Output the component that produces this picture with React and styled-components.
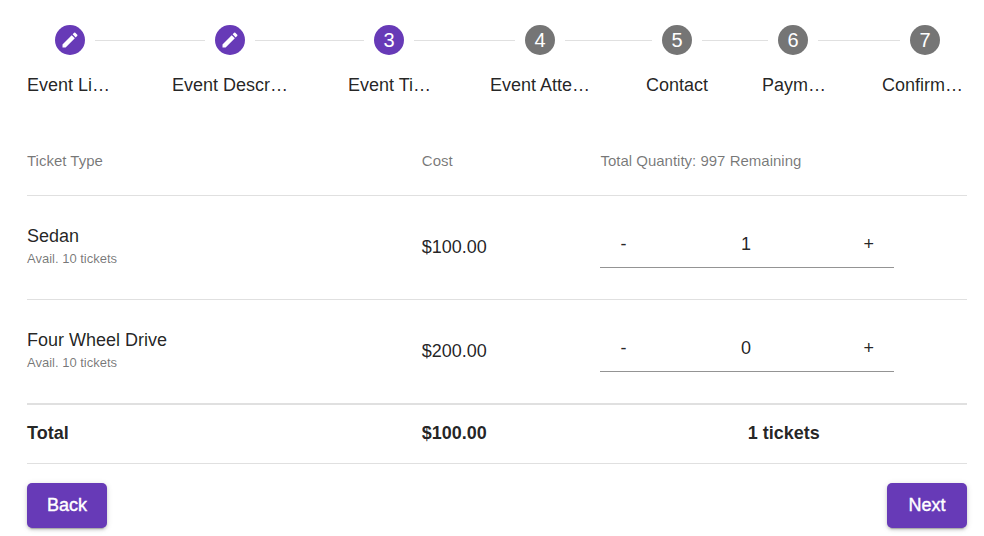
import React from 'react';
import styled, { createGlobalStyle } from 'styled-components';
import { MdEdit } from 'react-icons/md';

const PRIMARY = '#673ab7';
const INACTIVE = '#757575';
const TEXT = 'rgba(0, 0, 0, 0.87)';
const SECONDARY_TEXT = 'rgba(0, 0, 0, 0.54)';
const DIVIDER = '#e0e0e0';

const GlobalStyle = createGlobalStyle`
  * {
    box-sizing: border-box;
  }

  body {
    margin: 0;
    background: #fff;
    color: ${TEXT};
    font-family: "Liberation Sans", Arial, sans-serif;
    font-size: 18px;
    line-height: 24px;
  }

  button,
  input {
    font: inherit;
    color: inherit;
  }
`;

const Page = styled.main`
  padding: 25px 17px 8px 27px;
  overflow: hidden;
`;

const Stepper = styled.ol`
  display: flex;
  margin: 0 -32px 0 -30px;
  padding: 0;
  list-style: none;
`;

const StepItem = styled.li`
  display: flex;
  flex-direction: column;
  align-items: center;
  flex: ${(props) => props.$weight} 1 0;
  min-width: 0;
`;

const StepTrack = styled.div`
  display: flex;
  align-items: center;
  gap: 10px;
  width: 100%;
`;

const StepLine = styled.span`
  flex: 1;
  height: 1px;
  background: ${(props) => (props.$hidden ? 'transparent' : DIVIDER)};
`;

const StepCircle = styled.span`
  display: flex;
  align-items: center;
  justify-content: center;
  width: 30px;
  height: 30px;
  border-radius: 50%;
  background: ${(props) => (props.$active ? PRIMARY : INACTIVE)};
  color: #fff;
  font-size: 20px;
`;

const StepLabel = styled.span`
  width: ${(props) => props.$width}px;
  margin-top: 18px;
  white-space: nowrap;
`;

const Table = styled.table`
  width: 100%;
  margin-top: 29px;
  border-collapse: separate;
  border-spacing: 0;
  table-layout: fixed;
`;

const HeadCell = styled.th`
  width: ${(props) => props.$width};
  height: 70px;
  padding: 0;
  border-bottom: 1px solid ${DIVIDER};
  color: ${SECONDARY_TEXT};
  font-size: 15px;
  font-weight: 400;
  text-align: left;
`;

const Cell = styled.td`
  height: 104px;
  padding: 0 0 2px;
  border-bottom: 1px solid ${DIVIDER};
  vertical-align: middle;
`;

const TotalCell = styled.td`
  height: 60px;
  padding: 0 0 3px;
  border-top: 1px solid ${DIVIDER};
  border-bottom: 1px solid ${DIVIDER};
  font-weight: 700;
  text-align: ${(props) => props.$align || 'left'};
`;

const TicketName = styled.div`
  line-height: 24px;
`;

const TicketAvailable = styled.div`
  color: ${SECONDARY_TEXT};
  font-size: 13px;
  line-height: 22px;
`;

const Quantity = styled.div`
  display: flex;
  width: 80%;
  padding: 6px 2px 11px 0;
  border-bottom: 1px solid #949494;
`;

const QuantityButton = styled.button`
  width: 46px;
  padding: 0;
  border: 0;
  background: none;
  cursor: pointer;
`;

const QuantityInput = styled.input`
  flex: 1;
  min-width: 0;
  height: 24px;
  padding: 0;
  border: 0;
  outline: 0;
  background: none;
  text-align: center;
`;

const Actions = styled.div`
  display: flex;
  justify-content: space-between;
  margin-top: 19px;
`;

const ActionButton = styled.button`
  width: 80px;
  height: 45px;
  padding: 0 0 2px;
  border: 0;
  border-radius: 5px;
  background: ${PRIMARY};
  box-shadow: 0 4px 1px -3px rgba(0, 0, 0, 0.2), 0 2px 3px 0 rgba(0, 0, 0, 0.14), 0 1px 6px 0 rgba(0, 0, 0, 0.12);
  color: #fff;
  cursor: pointer;
  -webkit-text-stroke: 0.4px #fff;
`;

// labels are already shortened to fit beside each other
const STEPS = [
  { label: 'Event Li…', weight: 146, width: 86 },
  { label: 'Event Descr…', weight: 174, width: 116 },
  { label: 'Event Ti…', weight: 144, width: 82 },
  { label: 'Event Atte…', weight: 158, width: 100 },
  { label: 'Contact', weight: 116, width: 62 },
  { label: 'Paym…', weight: 116, width: 62 },
  { label: 'Confirm…', weight: 148, width: 86 },
];

const CURRENT_STEP = 2;

const TICKETS = [
  { name: 'Sedan', price: 100, available: 10 },
  { name: 'Four Wheel Drive', price: 200, available: 10 },
];

const money = (value) => `$${value.toFixed(2)}`;

const Step = ({ step, index }) => (
  <StepItem $weight={step.weight} aria-current={index === CURRENT_STEP ? 'step' : undefined}>
    <StepTrack>
      <StepLine $hidden={index === 0} />
      <StepCircle $active={index <= CURRENT_STEP}>
        {index < CURRENT_STEP ? <MdEdit size={20} /> : index + 1}
      </StepCircle>
      <StepLine $hidden={index === STEPS.length - 1} />
    </StepTrack>
    <StepLabel $width={step.width}>{step.label}</StepLabel>
  </StepItem>
);

const TicketRow = ({ ticket, count, onChange }) => {
  const update = (value) => onChange(Math.max(0, Math.min(ticket.available, value || 0)));

  return (
    <tr>
      <Cell>
        <TicketName>{ticket.name}</TicketName>
        <TicketAvailable>Avail. {ticket.available} tickets</TicketAvailable>
      </Cell>
      <Cell>{money(ticket.price)}</Cell>
      <Cell>
        <Quantity>
          <QuantityButton type="button" aria-label={`Remove ${ticket.name}`} onClick={() => update(count - 1)}>-</QuantityButton>
          <QuantityInput
            aria-label={`${ticket.name} quantity`}
            inputMode="numeric"
            value={count}
            onChange={(e) => update(parseInt(e.target.value, 10))}
          />
          <QuantityButton type="button" aria-label={`Add ${ticket.name}`} onClick={() => update(count + 1)}>+</QuantityButton>
        </Quantity>
      </Cell>
    </tr>
  );
};

const App = () => {
  const [counts, setCounts] = React.useState([1, 0]);

  const totalCost = TICKETS.reduce((sum, ticket, i) => sum + ticket.price * counts[i], 0);
  const totalCount = counts.reduce((sum, count) => sum + count, 0);

  return (
    <Page>
      <GlobalStyle />
      <Stepper>
        {STEPS.map((step, i) => (
          <Step key={step.label} step={step} index={i} />
        ))}
      </Stepper>
      <Table>
        <thead>
          <tr>
            <HeadCell scope="col" $width="42%">Ticket Type</HeadCell>
            <HeadCell scope="col" $width="19%">Cost</HeadCell>
            <HeadCell scope="col" $width="39%">Total Quantity: 997 Remaining</HeadCell>
          </tr>
        </thead>
        <tbody>
          {TICKETS.map((ticket, i) => (
            <TicketRow
              key={ticket.name}
              ticket={ticket}
              count={counts[i]}
              onChange={(value) => setCounts(counts.map((count, j) => (j === i ? value : count)))}
            />
          ))}
        </tbody>
        <tfoot>
          <tr>
            <TotalCell>Total</TotalCell>
            <TotalCell>{money(totalCost)}</TotalCell>
            <TotalCell $align="center">{totalCount} tickets</TotalCell>
          </tr>
        </tfoot>
      </Table>
      <Actions>
        <ActionButton type="button">Back</ActionButton>
        <ActionButton type="button">Next</ActionButton>
      </Actions>
    </Page>
  );
};

export default App;
